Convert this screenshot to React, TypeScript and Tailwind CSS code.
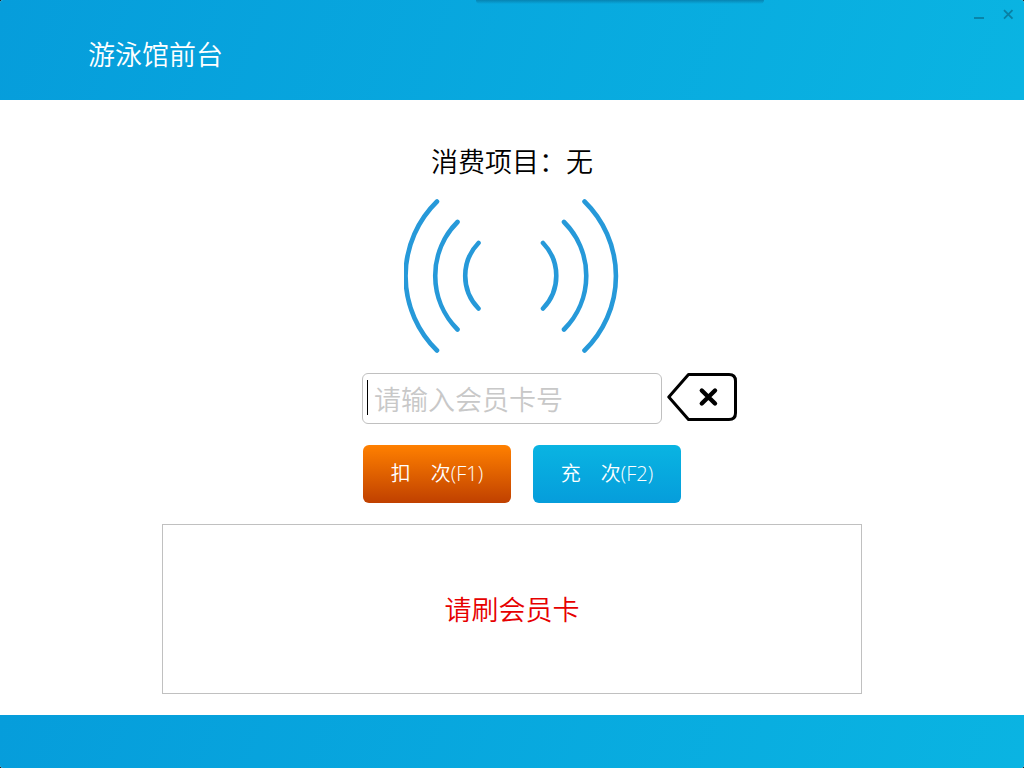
import { useState } from "react";

// Title bar with the window controls
function Header() {
    return (
        <header className="relative flex h-[100px] shrink-0 items-center bg-linear-[110deg] from-[#069ddb] to-[#0ab4e2] px-[88px]">
            <div className="absolute left-1/2 top-0 h-1 w-72 -translate-x-[36px] rounded-b-sm bg-linear-to-b from-[#0784b2] to-transparent" />
            <h1 className="pt-2 text-[27px] leading-9 font-[350] text-white">游泳馆前台</h1>
            <div className="absolute right-[10px] top-2 flex gap-[17px] text-[#0a7fa3]">
                <button type="button" aria-label="最小化" className="flex h-3 w-3 items-center justify-center">
                    <svg className="h-3 w-3 shrink-0" viewBox="0 0 12 12" stroke="currentColor" strokeWidth="1.8">
                        <path d="M1 10H11" />
                    </svg>
                </button>
                <button type="button" aria-label="关闭" className="flex h-3 w-3 items-center justify-center">
                    <svg className="h-3 w-3 shrink-0" viewBox="0 0 12 12" stroke="currentColor" strokeWidth="1.8">
                        <path d="M2 2.2L10.5 10.7M10.5 2.2L2 10.7" />
                    </svg>
                </button>
            </div>
        </header>
    );
}

// Card reader signal
function Signal() {
    return (
        <svg
            className="mt-5 h-[154px] w-[216px]"
            viewBox="0 0 216 154"
            fill="none"
            stroke="#2699d9"
            strokeWidth="4.6"
            strokeLinecap="round"
        >
            <path d="M33 2.5A104 104 0 0 0 33 151.5" />
            <path d="M53.5 23A76 76 0 0 0 53.5 130.5" />
            <path d="M74.5 44A47 47 0 0 0 74.5 109.5" />
            <path d="M139 44A47 47 0 0 1 139 109.5" />
            <path d="M160 23A76 76 0 0 1 160 130.5" />
            <path d="M180.5 2.5A104 104 0 0 1 180.5 151.5" />
        </svg>
    );
}

export default function App() {
    const [cardNo, setCardNo] = useState("");

    return (
        <div className="bg-black font-['Noto_Sans_CJK_SC',sans-serif]">
            <div className="flex min-h-screen flex-col overflow-hidden rounded-[3px] bg-white">
                <Header />

                <main className="flex flex-1 flex-col items-center px-4 pt-[43px] pb-5">
                    <p className="text-[27px] leading-9 font-[350] text-black">消费项目：无</p>
                    <Signal />

                    <form
                        className="mt-5 grid w-full grid-cols-[1fr_300px_1fr] gap-y-5"
                        onSubmit={(e) => e.preventDefault()}
                    >
                        <div className="relative col-start-2">
                            <input
                                type="text"
                                aria-label="会员卡号"
                                placeholder="请输入会员卡号"
                                value={cardNo}
                                onChange={(e) => setCardNo(e.target.value)}
                                className="block h-[51px] w-full rounded-md border border-[#c0c0c0] bg-white px-[11px] text-[27px] font-[350] text-black caret-transparent outline-none placeholder:text-[#c8c8c8]"
                            />
                            <span className="absolute left-[5px] top-[7px] h-[35px] w-px bg-black" />
                        </div>
                        <button
                            type="button"
                            aria-label="清除"
                            onClick={() => setCardNo("")}
                            className="ml-[5px] h-12 w-[70px]"
                        >
                            <svg className="h-12 w-[70px]" viewBox="0 0 70 48" fill="none" stroke="#000">
                                <path
                                    d="M21.5 1.5H62Q68.5 1.5 68.5 8V40Q68.5 46.5 62 46.5H21.5L1.8 24Z"
                                    strokeWidth="3"
                                    strokeLinejoin="round"
                                />
                                <path d="M34.8 17.5L48 30.5M48 17.5L34.8 30.5" strokeWidth="4.4" strokeLinecap="round" />
                            </svg>
                        </button>

                        {/* Actions */}
                        <div className="col-span-2 col-start-2 flex gap-[22px] pt-px pl-px font-['Open_Sans','Noto_Sans_CJK_SC',sans-serif]">
                            <button
                                type="button"
                                className="h-[58px] w-[148px] rounded-md bg-linear-to-b from-[#ff8000] to-[#c04000] text-xl font-[350] whitespace-pre text-white"
                            >
                                {"扣　次(F1)"}
                            </button>
                            <button
                                type="button"
                                className="h-[58px] w-[148px] rounded-md bg-linear-to-b from-[#0ab4e2] to-[#069ddb] text-xl font-[350] whitespace-pre text-white"
                            >
                                {"充　次(F2)"}
                            </button>
                        </div>
                    </form>

                    {/* Status */}
                    <div className="mt-[21px] flex h-[170px] w-full max-w-[700px] items-center justify-center border border-[#c0c0c0]">
                        <p className="text-[27px] leading-9 font-[350] text-[#e60000]">请刷会员卡</p>
                    </div>
                </main>

                <footer className="h-[53px] shrink-0 bg-linear-[110deg] from-[#069ddb] to-[#0ab4e2]" />
            </div>
        </div>
    );
}
